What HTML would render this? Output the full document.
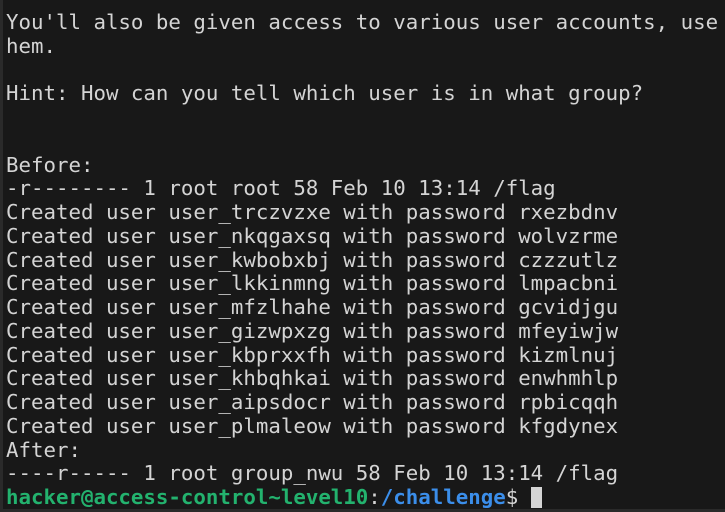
<!DOCTYPE html>
<html><head><style>
html,body{margin:0;padding:0;background:#181818;width:725px;height:512px;overflow:hidden}
.t{position:absolute;left:6px;top:11px;font-family:"DejaVu Sans Mono","Liberation Mono",monospace;font-size:20.75px;line-height:23.75px;color:#d4d4d4;white-space:pre;}
.g{color:#23b26e;font-weight:bold}
.b{color:#3b8eea;font-weight:bold}
.c{display:inline-block;width:11px;height:21px;background:#d4d4d4;vertical-align:-4px}
.edge{position:absolute;left:0;top:0;width:3px;height:512px;background:#2a2a2a}
.bot{position:absolute;left:0;bottom:0;width:725px;height:3px;background:#2a2a2a}
</style></head><body>
<div class="edge"></div><div class="bot"></div>
<div class="t">You'll also be given access to various user accounts, use
hem.

Hint: How can you tell which user is in what group?


Before:
-r-------- 1 root root 58 Feb 10 13:14 /flag
Created user user_trczvzxe with password rxezbdnv
Created user user_nkqgaxsq with password wolvzrme
Created user user_kwbobxbj with password czzzutlz
Created user user_lkkinmng with password lmpacbni
Created user user_mfzlhahe with password gcvidjgu
Created user user_gizwpxzg with password mfeyiwjw
Created user user_kbprxxfh with password kizmlnuj
Created user user_khbqhkai with password enwhmhlp
Created user user_aipsdocr with password rpbicqqh
Created user user_plmaleow with password kfgdynex
After:
----r----- 1 root group_nwu 58 Feb 10 13:14 /flag
<span class="g">hacker@access-control~level10</span>:<span class="b">/challenge</span>$ <span class="c"></span></div>
</body></html>
